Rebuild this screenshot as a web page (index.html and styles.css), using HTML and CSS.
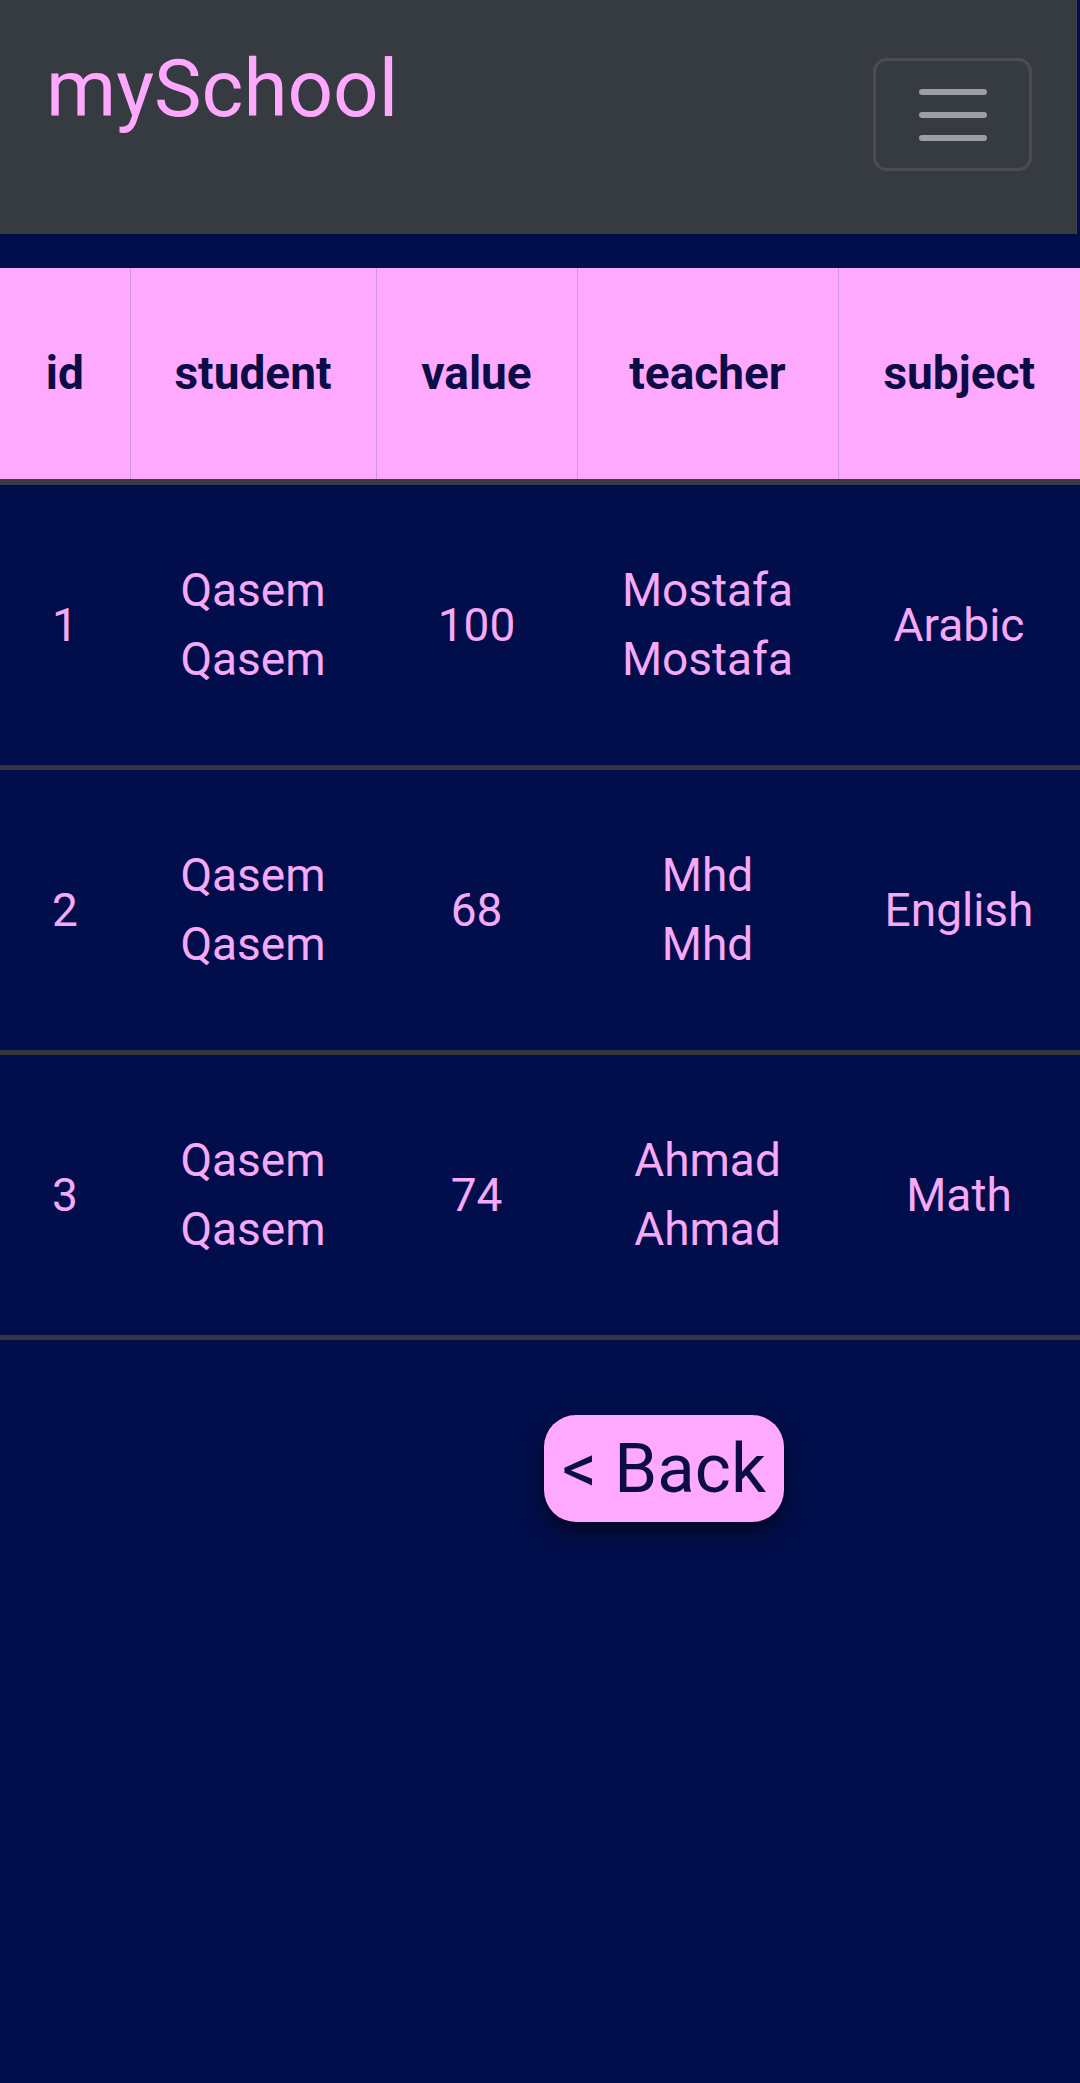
FILE: index.html
```html
<!DOCTYPE html>
<html lang="en">
<head>
<meta charset="utf-8">
<title>mySchool</title>
<link rel="stylesheet" href="styles.css">
</head>
<body>
<nav class="navbar">
  <a class="brand" href="#">mySchool</a>
  <button class="toggler" type="button" aria-label="Toggle navigation">
    <span class="bar"></span>
    <span class="bar"></span>
    <span class="bar"></span>
  </button>
</nav>
<main class="content">
  <table class="grades">
    <colgroup>
      <col class="c-id"><col class="c-student"><col class="c-value"><col class="c-teacher"><col class="c-subject">
    </colgroup>
    <thead>
      <tr><th>id</th><th>student</th><th>value</th><th>teacher</th><th>subject</th></tr>
    </thead>
    <tbody>
      <tr><td>1</td><td><span class="stack">Qasem Qasem</span></td><td>100</td><td><span class="stack">Mostafa Mostafa</span></td><td>Arabic</td></tr>
      <tr><td>2</td><td><span class="stack">Qasem Qasem</span></td><td>68</td><td><span class="stack">Mhd Mhd</span></td><td>English</td></tr>
      <tr><td>3</td><td><span class="stack">Qasem Qasem</span></td><td>74</td><td><span class="stack">Ahmad Ahmad</span></td><td>Math</td></tr>
    </tbody>
  </table>
  <div class="actions">
    <a class="back" href="#">&lt; Back</a>
  </div>
</main>
</body>
</html>
```
FILE: styles.css
```css
html, body {
  margin: 0;
  padding: 0;
}
body {
  background: #020e4b;
  font-family: Roboto, "Liberation Sans", sans-serif;
  min-height: 2083px;
}
.navbar {
  display: flex;
  justify-content: space-between;
  align-items: flex-start;
  box-sizing: border-box;
  height: 234px;
  margin-right: 3px;
  padding: 29px 44px 0 46px;
  background: #363a41;
  border-right: 1px solid #3f434b;
}
.brand {
  color: #fea9fe;
  font-size: 80px;
  line-height: 1.5;
  text-decoration: none;
}
.toggler {
  margin-top: 29px;
  box-sizing: border-box;
  width: 159px;
  height: 113px;
  background: transparent;
  border: 3px solid rgba(255, 255, 255, 0.1);
  border-radius: 14px;
  display: flex;
  flex-direction: column;
  align-items: center;
  justify-content: center;
  gap: 17px;
  padding: 0;
}
.bar {
  display: block;
  width: 68px;
  height: 6px;
  border-radius: 3px;
  background: #9b9ea2;
}
.content {
  padding-top: 34px;
}
.grades {
  width: 1080px;
  table-layout: fixed;
  border-collapse: collapse;
  text-align: center;
  font-size: 46px;
  line-height: 69px;
}
.c-id { width: 130px; }
.c-student { width: 246px; }
.c-value { width: 201px; }
.c-teacher { width: 261px; }
.c-subject { width: 242px; }
.grades th {
  background: #fea9fe;
  color: #0c0d47;
  font-weight: 700;
  padding: 71px 0;
  border-left: 1px solid #c99ad6;
  border-bottom: 6px solid #3b3b47;
  vertical-align: middle;
}
.grades th:first-child {
  border-left: none;
}
.grades td {
  color: #f6a9f8;
  padding: 71px 0;
  border-bottom: 5px solid #34363f;
  vertical-align: middle;
}
.stack {
  display: inline-block;
  width: min-content;
}
.actions {
  display: flex;
  justify-content: center;
  padding: 75px 0 0 248px;
}
.back {
  display: inline-block;
  background: #fea9fe;
  color: #0c0d47;
  text-decoration: none;
  font-size: 69px;
  line-height: 107px;
  height: 107px;
  padding: 0 18px;
  border-radius: 32px;
  box-shadow: 0 10px 22px rgba(0, 0, 0, 0.55);
}
```
